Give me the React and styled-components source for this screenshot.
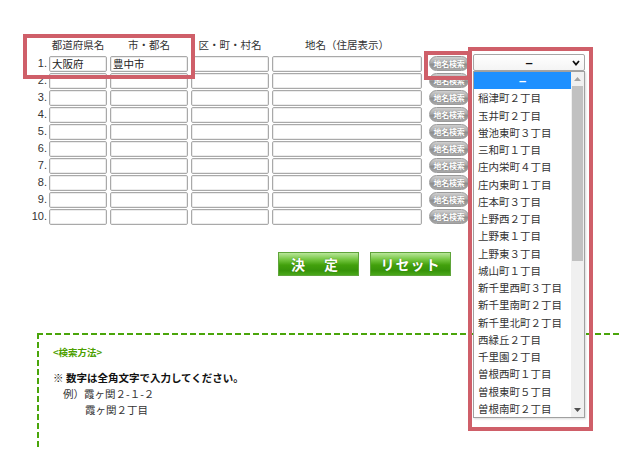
import React from 'react';
import styled, { createGlobalStyle } from 'styled-components';

const Global = createGlobalStyle`
  html, body { margin: 0; padding: 0; background: #fff; }
  body { font-family: "Noto Sans CJK JP", "Noto Sans", sans-serif; }
`;

const Page = styled.div`
  position: relative;
  width: 637px;
  height: 449px;
  overflow: hidden;
  background: #fff;
  color: #333;
  font-family: "Noto Sans CJK JP", "Noto Sans", sans-serif;
`;

const Form = styled.div`
  display: grid;
  grid-template-columns: 49px 61px 81px 81px 157px 44px 112px;
  grid-template-rows: 20px;
  grid-auto-rows: 17px;
  padding-top: 35px;
`;

const HeadCell = styled.div`
  width: ${p => p.$w}px;
  font-size: 10.5px;
  line-height: 20px;
  text-align: center;
  white-space: nowrap;
  color: #333;
`;

const Num = styled.div`
  font-family: "Liberation Sans", Arial, sans-serif;
  font-size: 11px;
  line-height: 17px;
  text-align: right;
  padding-right: 2px;
  color: #333;
`;

const Field = styled.div`
  box-sizing: border-box;
  width: ${p => p.$w}px;
  height: 16px;
  margin-top: 0.5px;
  border: 1px solid #a9a9a9;
  border-radius: 2px;
  box-shadow: inset 0 0 0 1px #ececec;
  background: #fff;
  font-size: 10.5px;
  line-height: 14px;
  padding-left: 2px;
  color: #222;
  white-space: nowrap;
  overflow: hidden;
`;

const SearchBtn = styled.div`
  box-sizing: border-box;
  width: 40px;
  height: 15px;
  margin-top: 1px;
  border-radius: 7.5px;
  background: linear-gradient(#cfcfcf 0%, #ababab 45%, #8e8e8e 55%, #a9a9a9 100%);
  border: 1px solid #9a9a9a;
  color: #fff;
  font-size: 8px;
  font-weight: bold;
  line-height: 13px;
  text-align: center;
  letter-spacing: -0.3px;
  white-space: nowrap;
  text-shadow: 0 0 1px #777;
`;

const SelectWrap = styled.div`
  position: relative;
  width: 112px;
  margin-top: -1px;
  z-index: 3;
`;

const SelectBox = styled.div`
  box-sizing: border-box;
  height: 17px;
  border: 1px solid #a6a6a6;
  border-radius: 2px;
  background: linear-gradient(#fff, #f4f4f4);
  display: flex;
  align-items: center;
  justify-content: center;
  position: relative;
`;

const Dash = styled.span`
  font-family: "Liberation Sans", Arial, sans-serif;
  font-size: 13px;
  font-weight: bold;
  line-height: 15px;
  color: ${p => p.$light ? '#fff' : '#111'};
`;

const Chevron = styled.svg`
  position: absolute;
  right: 4px;
  top: 5px;
`;

const ListBox = styled.div`
  position: absolute;
  left: 0;
  top: 17px;
  width: 112px;
  height: 347px;
  box-sizing: border-box;
  border: 1px solid #a0a0a0;
  background: #fff;
  box-shadow: 1px 1px 2px rgba(0, 0, 0, 0.15);
  display: flex;
`;

const Items = styled.div`
  flex: 1;
  display: flex;
  flex-direction: column;
`;

const Item = styled.div`
  height: 17.25px;
  line-height: 17px;
  font-size: 10.5px;
  padding-left: ${p => (p.$center ? 0 : 4)}px;
  text-align: ${p => (p.$center ? 'center' : 'left')};
  background: ${p => (p.$active ? '#1e90ff' : 'transparent')};
  color: ${p => (p.$active ? '#fff' : '#333')};
  white-space: nowrap;
`;

const ScrollTrack = styled.div`
  width: 13px;
  background: #f0f0f0;
  display: flex;
  flex-direction: column;
  align-items: center;
`;

const ScrollArrow = styled.svg`
  flex: none;
  margin: 5px 0;
`;

const ScrollThumb = styled.div`
  width: 11px;
  height: 175px;
  background: #c1c1c1;
`;

const Spacer = styled.div`
  flex: 1;
`;

const Actions = styled.div`
  display: flex;
  gap: 11px;
  padding-left: 278px;
  margin-top: 27px;
`;

const GreenBtn = styled.div`
  box-sizing: border-box;
  width: 81px;
  height: 24px;
  border: 1px solid #5fa43a;
  background: linear-gradient(#b9e69a 0%, #74c640 30%, #42a00c 55%, #37930a 80%, #4aa81a 100%);
  color: #fff;
  font-size: 14px;
  font-weight: bold;
  line-height: 22px;
  text-align: center;
  letter-spacing: ${p => p.$spacing || 0}px;
  text-shadow: 0 0 1px #2a6a00;
`;

const Guide = styled.div`
  box-sizing: border-box;
  margin-top: 57px;
  margin-left: 37px;
  width: 582px;
  height: 200px;
  background:
    repeating-linear-gradient(to right, #4aa50a 0 6px, transparent 6px 9px) left top / 100% 2px no-repeat,
    repeating-linear-gradient(to bottom, #4aa50a 0 6px, transparent 6px 9px) left top / 2px 100% no-repeat;
  padding: 11px 0 0 16px;
`;

const GuideTitle = styled.div`
  font-size: 9.5px;
  font-weight: bold;
  line-height: 16px;
  color: #4d9f00;
`;

const Note = styled.div`
  margin-top: 10px;
  font-size: 10.5px;
  font-weight: bold;
  line-height: 16px;
  color: #111;
`;

const Example = styled.div`
  font-size: 10.5px;
  line-height: 16px;
  color: #333;
  padding-left: ${p => p.$indent}px;
`;

const Marker = styled.div`
  position: absolute;
  left: ${p => p.$x}px;
  top: ${p => p.$y}px;
  width: ${p => p.$w}px;
  height: ${p => p.$h}px;
  box-sizing: border-box;
  border: 4px solid #cf5f69;
  pointer-events: none;
  z-index: 5;
`;

const widths = [58, 78, 78, 150];
const headers = ['都道府県名', '市・都名', '区・町・村名', '地名（住居表示）'];

const options = [
  '–',
  '稲津町２丁目',
  '玉井町２丁目',
  '蛍池東町３丁目',
  '三和町１丁目',
  '庄内栄町４丁目',
  '庄内東町１丁目',
  '庄本町３丁目',
  '上野西２丁目',
  '上野東１丁目',
  '上野東３丁目',
  '城山町１丁目',
  '新千里西町３丁目',
  '新千里南町２丁目',
  '新千里北町２丁目',
  '西緑丘２丁目',
  '千里園２丁目',
  '曽根西町１丁目',
  '曽根東町５丁目',
  '曽根南町２丁目',
];

const rows = Array.from({ length: 10 }, (_, i) => i + 1);

export default function App() {
  return (
    <Page>
      <Global />
      <Form>
        <div />
        {headers.map((h, i) => (
          <HeadCell key={h} $w={widths[i]}>{h}</HeadCell>
        ))}
        <div />
        <div />
        {rows.map(n => (
          <React.Fragment key={n}>
            <Num>{n}.</Num>
            <Field $w={58}>{n === 1 ? '大阪府' : ''}</Field>
            <Field $w={78}>{n === 1 ? '豊中市' : ''}</Field>
            <Field $w={78} />
            <Field $w={150} />
            <SearchBtn>地名検索</SearchBtn>
            {n === 1 ? (
              <SelectWrap>
                <SelectBox>
                  <Dash>–</Dash>
                  <Chevron width="8" height="6" viewBox="0 0 8 6">
                    <path d="M1 1 L4 4.5 L7 1" fill="none" stroke="#111" strokeWidth="1.8" />
                  </Chevron>
                </SelectBox>
                <ListBox>
                  <Items>
                    {options.map((o, i) => (
                      <Item key={o} $active={i === 0} $center={i === 0}>
                        {i === 0 ? <Dash $light>–</Dash> : o}
                      </Item>
                    ))}
                  </Items>
                  <ScrollTrack>
                    <ScrollArrow width="7" height="4" viewBox="0 0 7 4">
                      <path d="M0 4 L3.5 0 L7 4 Z" fill="#a3a3a3" />
                    </ScrollArrow>
                    <ScrollThumb />
                    <Spacer />
                    <ScrollArrow width="7" height="4" viewBox="0 0 7 4">
                      <path d="M0 0 L3.5 4 L7 0 Z" fill="#505050" />
                    </ScrollArrow>
                  </ScrollTrack>
                </ListBox>
              </SelectWrap>
            ) : (
              <div />
            )}
          </React.Fragment>
        ))}
      </Form>
      <Actions>
        <GreenBtn $spacing={8}>決 定</GreenBtn>
        <GreenBtn $spacing={1}>リセット</GreenBtn>
      </Actions>
      <Guide>
        <GuideTitle>&lt;検索方法&gt;</GuideTitle>
        <Note>※ 数字は全角文字で入力してください。</Note>
        <Example $indent={10}>例）霞ヶ関２-１-２</Example>
        <Example $indent={32}>霞ヶ関２丁目</Example>
      </Guide>
      <Marker $x={23} $y={34} $w={172} $h={45} />
      <Marker $x={424} $y={51} $w={47} $h={29} />
      <Marker $x={468} $y={47} $w={125} $h={384} />
    </Page>
  );
}
